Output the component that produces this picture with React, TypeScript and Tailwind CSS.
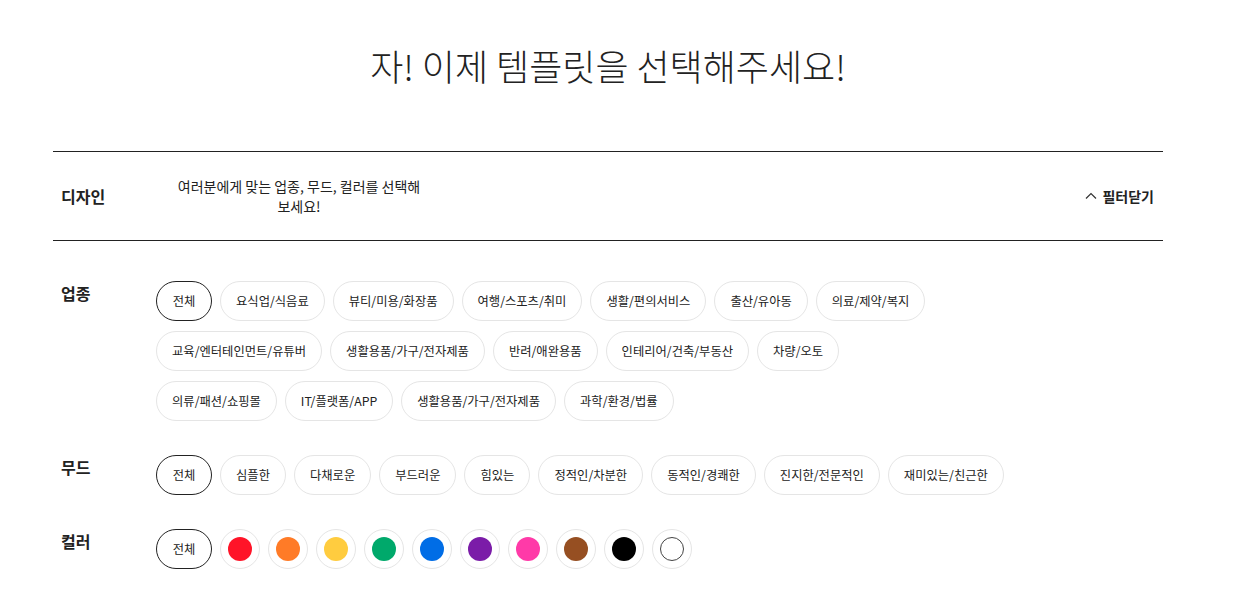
import React, { useState } from 'react';

// industries are laid out in fixed rows, as in the design
const industryRows = [
  ['전체', '요식업/식음료', '뷰티/미용/화장품', '여행/스포츠/취미', '생활/편의서비스', '출산/유아동', '의료/제약/복지'],
  ['교육/엔터테인먼트/유튜버', '생활용품/가구/전자제품', '반려/애완용품', '인테리어/건축/부동산', '차량/오토'],
  ['의류/패션/쇼핑몰', 'IT/플랫폼/APP', '생활용품/가구/전자제품', '과학/환경/법률'],
];

const moods = [
  '전체',
  '심플한',
  '다채로운',
  '부드러운',
  '힘있는',
  '정적인/차분한',
  '동적인/경쾌한',
  '진지한/전문적인',
  '재미있는/친근한',
];

const colors = [
  { name: 'red', cls: 'bg-[#ff1428]' },
  { name: 'orange', cls: 'bg-[#ff7b27]' },
  { name: 'yellow', cls: 'bg-[#ffcc3f]' },
  { name: 'green', cls: 'bg-[#00a96b]' },
  { name: 'blue', cls: 'bg-[#006de6]' },
  { name: 'purple', cls: 'bg-[#7b1ca8]' },
  { name: 'pink', cls: 'bg-[#ff3aa8]' },
  { name: 'brown', cls: 'bg-[#964f22]' },
  { name: 'black', cls: 'bg-[#000000]' },
  { name: 'white', cls: 'bg-white border border-[#444]' },
];

const Chip: React.FC<{ label: string; active?: boolean; onClick?: () => void }> = ({ label, active, onClick }) => (
  <button
    onClick={onClick}
    className={`h-10 min-w-[56px] px-[15px] rounded-full border text-[12.3px] text-[#222] bg-white whitespace-nowrap ${
      active ? 'border-[#222]' : 'border-[#e5e5e5]'
    }`}
  >
    {label}
  </button>
);

const FilterRow: React.FC<{ label: string; children: React.ReactNode }> = ({ label, children }) => (
  <div className="flex">
    <div className="w-[103px] shrink-0 pl-2 text-[16px] font-bold text-[#222] leading-6">{label}</div>
    <div className="flex flex-col gap-[10px] flex-1">{children}</div>
  </div>
);

export default function App() {
  const [industry, setIndustry] = useState('0-0');
  const [mood, setMood] = useState(0);
  const [color, setColor] = useState(-1);

  return (
    <div className="min-h-screen bg-white font-['Noto_Sans_CJK_KR','Noto_Sans',sans-serif] text-[#222]">
      <div className="ml-[53px] w-[1110px]">
        <h1 className="pt-[37px] mb-[58px] text-center text-[36px] leading-[56px] font-light text-[#222]">
          자! 이제 템플릿을 선택해주세요!
        </h1>

        {/* design header row */}
        <div className="h-[90px] border-y border-[#222] flex items-center">
          <div className="w-[121px] pl-2 text-[16px] font-bold">디자인</div>
          <p className="w-[250px] text-center text-[14px] leading-5">
            여러분에게 맞는 업종, 무드, 컬러를 선택해 보세요!
          </p>
          <button className="ml-auto mr-[9px] flex items-center gap-[5px] text-[14px] font-bold">
            <svg width="12" height="12" viewBox="0 0 12 12" fill="none" stroke="#333" strokeWidth="1.2">
              <path d="M1 8.5 L6 3.5 L11 8.5" />
            </svg>
            필터닫기
          </button>
        </div>

        <div className="pt-10 flex flex-col gap-[34px]">
          <FilterRow label="업종">
            {industryRows.map((row, r) => (
              <div key={r} className="flex gap-2">
                {row.map((item, i) => (
                  <Chip
                    key={i}
                    label={item}
                    active={industry === `${r}-${i}`}
                    onClick={() => setIndustry(`${r}-${i}`)}
                  />
                ))}
              </div>
            ))}
          </FilterRow>

          <FilterRow label="무드">
            <div className="flex gap-2">
              {moods.map((item, i) => (
                <Chip key={i} label={item} active={mood === i} onClick={() => setMood(i)} />
              ))}
            </div>
          </FilterRow>

          <FilterRow label="컬러">
            <div className="flex gap-2">
              <Chip label="전체" active={color === -1} onClick={() => setColor(-1)} />
              {colors.map((c, i) => (
                <button
                  key={c.name}
                  onClick={() => setColor(i)}
                  className={`w-10 h-10 rounded-full border flex items-center justify-center bg-white ${
                    color === i ? 'border-[#222]' : 'border-[#e5e5e5]'
                  }`}
                >
                  <span className={`w-6 h-6 rounded-full ${c.cls}`} />
                </button>
              ))}
            </div>
          </FilterRow>
        </div>
      </div>
    </div>
  );
}
